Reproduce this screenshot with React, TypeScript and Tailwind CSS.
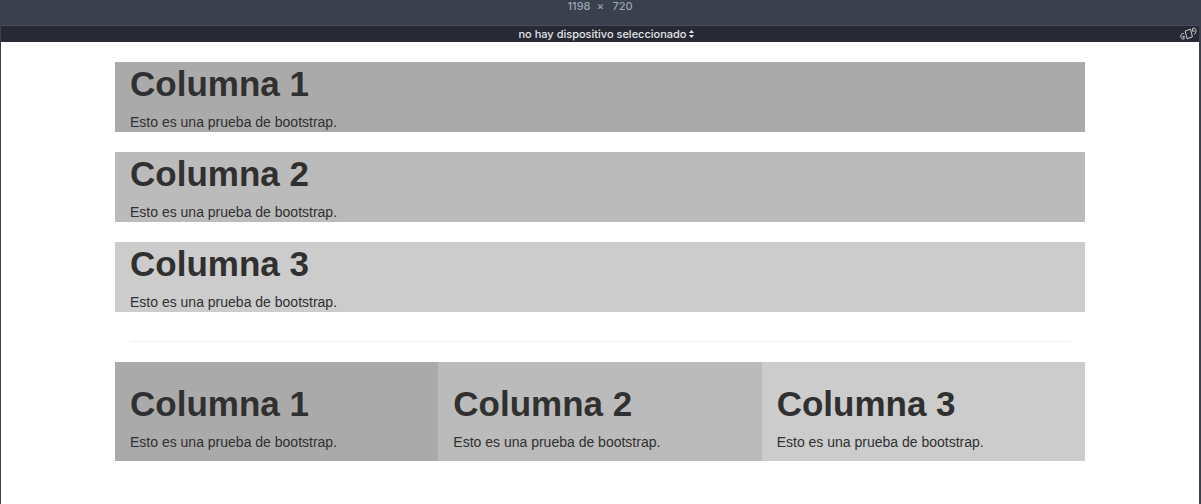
import { useState } from "react";

const columns = [
  { title: "Columna 1", color: "bg-[#aaaaaa]" },
  { title: "Columna 2", color: "bg-[#bbbbbb]" },
  { title: "Columna 3", color: "bg-[#cccccc]" },
];

function ColumnText({ title }: { title: string }) {
  return (
    <>
      <h1 className="mb-2 pt-0.5 text-[35px] leading-10 font-bold">{title}</h1>
      <p className="text-[14px] leading-5">Esto es una prueba de bootstrap.</p>
    </>
  );
}

function RotateIcon() {
  return (
    <svg width="17" height="14" viewBox="0 0 17 14" fill="none" stroke="#c9cbd0" strokeWidth="1">
      <path d="M5.2 4 10.6 2.2 12.4 9.8 7 11.8Z" />
      <path d="M3.8 6.4C1.4 6.2.2 8.4 1 10.4 1.5 11.8 2.6 12.2 4 11.8M4 9v3.2M2.4 9.4h1.8" />
      <path d="M12.6 1.4C14.6.4 16.2 2 16 4.2 15.9 5.8 15.2 6.8 14 7.6M12.6 1.4v2.8h2" />
    </svg>
  );
}

export default function App() {
  const [width, setWidth] = useState("1198");
  const [height, setHeight] = useState("720");

  return (
    <div className="flex min-h-screen flex-col bg-[#3b404e] font-['Liberation_Sans',Arial,sans-serif] text-[#303030]">
      <div className="flex h-[25px] items-start justify-center gap-1 font-[Inter,sans-serif] text-[11px] leading-[13px] font-medium text-[#97a4b6]">
        <input
          aria-label="Ancho"
          value={width}
          onChange={(e) => setWidth(e.target.value)}
          className="w-7 bg-transparent text-right outline-none"
        />
        <span className="w-3 text-center">×</span>
        <input
          aria-label="Alto"
          value={height}
          onChange={(e) => setHeight(e.target.value)}
          className="w-7 bg-transparent pl-0.5 outline-none"
        />
      </div>

      <div className="mr-0.5 ml-px grid h-[17px] grid-cols-[1fr_auto_1fr] items-center border-t border-[#484c5c] bg-[#272a35]">
        <label className="col-start-2 ml-3 flex items-center gap-0.5 text-[#e3e4e8]">
          <select
            aria-label="Dispositivo"
            className="field-sizing-content h-4 appearance-none bg-transparent font-[Inter,sans-serif] text-[11px] leading-4 font-medium outline-none"
          >
            <option>no hay dispositivo seleccionado</option>
          </select>
          <svg width="5" height="8" viewBox="0 0 5 8" fill="currentColor">
            <path d="M2.5 0 5 3H0ZM0 5h5L2.5 8Z" />
          </svg>
        </label>
        <button aria-label="Girar pantalla" className="mr-0.5 justify-self-end">
          <RotateIcon />
        </button>
      </div>

      <main className="mr-0.5 ml-px flex-1 bg-white px-5 pt-5 pb-10">
        <div className="mx-auto max-w-[970px]">
          <div className="flex flex-col gap-5">
            {columns.map((column) => (
              <section key={column.title} className={`px-[15px] ${column.color}`}>
                <ColumnText title={column.title} />
              </section>
            ))}
          </div>

          <hr className="mx-[15px] mt-[29px] mb-5 border-[#eeeeee]" />

          <div className="grid grid-cols-3">
            {columns.map((column) => (
              <section key={column.title} className={`px-[15px] pt-5 pb-[9px] ${column.color}`}>
                <ColumnText title={column.title} />
              </section>
            ))}
          </div>
        </div>
      </main>
    </div>
  );
}
